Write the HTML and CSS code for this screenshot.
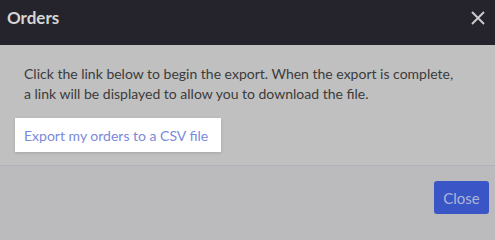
FILE: index.html
```html
<!DOCTYPE html>
<html>
<head>
<meta charset="utf-8">
<link rel="stylesheet" href="styles.css">
</head>
<body>
<div class="modal">
  <header class="modal-header">
    <h1 class="modal-title">Orders</h1>
    <button class="modal-close" aria-label="Close">
      <svg width="14" height="14" viewBox="0 0 14 14"><path d="M1 1 L13 13 M13 1 L1 13" stroke="#c9c9cc" stroke-width="2" fill="none"/></svg>
    </button>
  </header>
  <section class="modal-body">
    <p class="modal-text">Click the link below to begin the export. When the export is complete, a link will be displayed to allow you to download the file.</p>
    <div class="export-box"><a class="export-link" href="#">Export my orders to a CSV file</a></div>
  </section>
  <footer class="modal-footer">
    <button class="btn-close">Close</button>
  </footer>
</div>
</body>
</html>
```
FILE: styles.css
```css
html, body { margin: 0; padding: 0; }
body { width: 495px; height: 218px; overflow: hidden; font-family: Lato, "Liberation Sans", sans-serif; background: #bbbbbd; }
.modal { display: flex; flex-direction: column; height: 218px; }
.modal-header { height: 45px; flex: none; background: #25242c; display: flex; align-items: center; justify-content: space-between; padding: 0 10px 0 7px; box-sizing: border-box; }
.modal-title { margin: 0; font-size: 17px; font-weight: 700; color: #d6d6d6; line-height: 1; position: relative; top: -5px; }
.modal-close { background: none; border: 0; padding: 0; width: 14px; height: 14px; display: flex; position: relative; top: -5px; }
.modal-body { flex: none; background: #c0c0c0; padding: 19px 0 12px 15px; height: 121px; box-sizing: border-box; border-bottom: 1px solid #b1b0bd; }
.modal-text { margin: 0 0 14px 9px; max-width: 434px; font-size: 14px; line-height: 20px; color: #3b3b3b; }
.export-box { display: inline-block; background: #fff; padding: 0 13px 0 9px; height: 34px; line-height: 34px; box-shadow: 0 1px 3px rgba(0,0,0,0.15); vertical-align: top; }
.export-link { color: #7b89dc; text-decoration: none; font-size: 14px; }
.modal-footer { flex: 1; display: flex; justify-content: flex-end; align-items: flex-start; padding: 15px 6px 0 0; }
.btn-close { background: #3a55c6; color: #aeb6d6; border: 0; border-radius: 3px; width: 55px; height: 33px; font-family: inherit; font-size: 15px; padding: 0; }
```
